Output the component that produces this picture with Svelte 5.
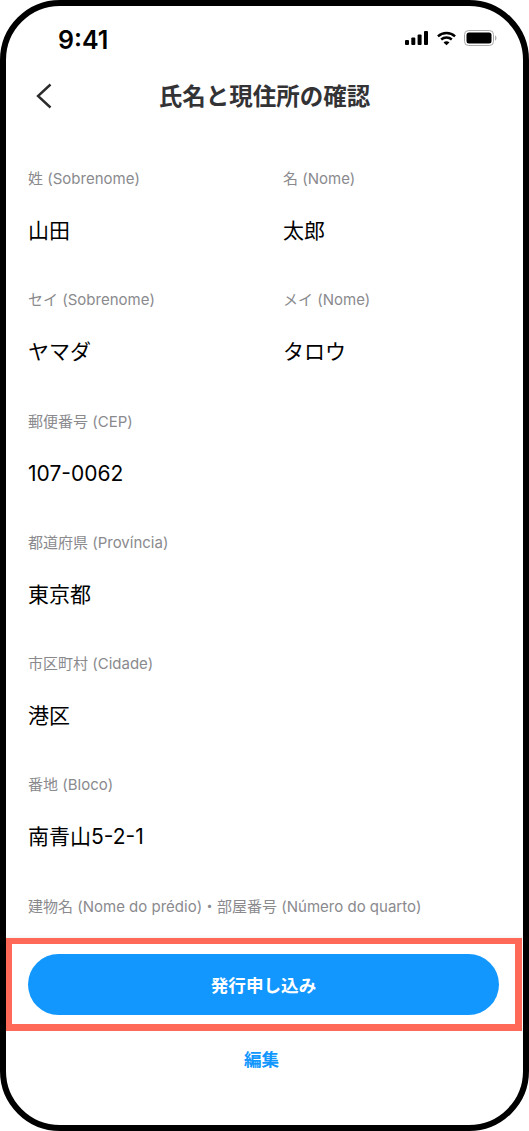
<script>
  const rows = [
    [{ label: '姓 (Sobrenome)', value: '山田' }, { label: '名 (Nome)', value: '太郎' }],
    [{ label: 'セイ (Sobrenome)', value: 'ヤマダ' }, { label: 'メイ (Nome)', value: 'タロウ' }],
    [{ label: '郵便番号 (CEP)', value: '107-0062' }],
    [{ label: '都道府県 (Província)', value: '東京都' }],
    [{ label: '市区町村 (Cidade)', value: '港区' }],
    [{ label: '番地 (Bloco)', value: '南青山5-2-1' }],
    [{ label: '建物名 (Nome do prédio)・部屋番号 (Número do quarto)', value: '' }]
  ];
</script>

<div class="phone">
  <div class="status">
    <span class="time">9:41</span>
    <div class="status-icons">
      <svg width="23" height="14" viewBox="0 0 23 14" fill="#000">
        <rect x="0" y="9" width="4" height="5" rx="1" />
        <rect x="6.3" y="6.5" width="4" height="7.5" rx="1" />
        <rect x="12.6" y="3.5" width="4" height="10.5" rx="1" />
        <rect x="19" y="0" width="4" height="14" rx="1" />
      </svg>
      <svg class="wifi" width="19" height="15" viewBox="0 0 20 15" fill="none" stroke="#000" stroke-width="2.6">
        <path d="M1 5.2C6 .7 14 .7 19 5.2" />
        <path d="M4.4 8.6c3.2-2.8 8-2.8 11.2 0" />
        <path d="M10 14.6 6.9 11.6c1.8-1.5 4.4-1.5 6.2 0Z" fill="#000" stroke="none" />
      </svg>
      <svg width="33" height="16" viewBox="0 0 33 16">
        <rect x="0.5" y="0.5" width="29" height="15" rx="4" fill="none" stroke="#a8a8a8" />
        <rect x="2.5" y="2.5" width="25" height="11" rx="2.5" fill="#000" />
        <path d="M31 5.5c1 .3 1.5 1.3 1.5 2.5s-.5 2.2-1.5 2.5Z" fill="#b0b0b0" />
      </svg>
    </div>
  </div>

  <header class="nav">
    <button class="back" aria-label="戻る">
      <svg width="16" height="26" viewBox="0 0 16 26" fill="none" stroke="#2c2c2e" stroke-width="2.4">
        <path d="M14.5 1.5 2 13l12.5 11.5" />
      </svg>
    </button>
    <h1>氏名と現住所の確認</h1>
  </header>

  <main class="form">
    {#each rows as row}
      <div class="row">
        {#each row as field}
          <div class="field">
            <div class="label">{field.label}</div>
            <div class="value">{field.value}</div>
          </div>
        {/each}
      </div>
    {/each}
  </main>

  <div class="action">
    <button class="primary">発行申し込み</button>
  </div>
  <button class="edit">編集</button>
</div>

<style>
  :global(body) {
    margin: 0;
    background: #fff;
  }

  .phone {
    box-sizing: border-box;
    width: 529px;
    height: 1131px;
    border: 6px solid #000;
    border-radius: 60px;
    background: #fff;
    overflow: hidden;
    display: flex;
    flex-direction: column;
    font-family: Inter, "Noto Sans CJK JP", sans-serif;
  }

  .status {
    height: 57px;
    box-sizing: border-box;
    flex: none;
    display: flex;
    align-items: flex-start;
    justify-content: space-between;
    padding: 19px 26px 0 52px;
  }

  .time {
    font-size: 25px;
    font-weight: 600;
    line-height: 30px;
    color: #000;
  }

  .status-icons {
    display: flex;
    align-items: center;
    gap: 9px;
    margin-top: 5px;
  }

  .wifi {
    margin-right: -1px;
  }

  .nav {
    position: relative;
    height: 64px;
    flex: none;
    display: flex;
    align-items: center;
    justify-content: center;
  }

  .nav h1 {
    margin: 0;
    font-size: 23.5px;
    font-weight: 700;
    color: #333336;
  }

  .back {
    position: absolute;
    left: 30px;
    top: 20px;
    padding: 0;
    border: 0;
    background: none;
    line-height: 0;
  }

  .form {
    flex: 1;
    min-height: 0;
    overflow: hidden;
    padding: 42px 22px 0;
  }

  .row {
    display: flex;
    height: 121.3px;
  }

  .field {
    width: 255px;
    flex: none;
  }

  .row:last-child .field {
    width: auto;
  }

  .label {
    font-size: 15px;
    line-height: 20px;
    color: #8a8a8e;
    white-space: nowrap;
  }

  .value {
    margin-top: 27px;
    font-size: 21px;
    line-height: 30px;
    color: #000;
  }

  .action {
    flex: none;
    box-sizing: border-box;
    height: 93px;
    margin-right: 1px;
    border: solid #ff6a58;
    border-width: 6px 7px 7px 6px;
    padding: 10px 16px 0;
    box-shadow: 0 -2px 2px rgba(0, 0, 0, 0.04);
  }

  .primary {
    display: block;
    width: 100%;
    height: 60.5px;
    border: 0;
    border-radius: 31px;
    background: #1297ff;
    color: #fff;
    font: 700 17.6px Inter, "Noto Sans CJK JP", sans-serif;
  }

  .edit {
    flex: none;
    align-self: center;
    margin: 13px 0 53px -6px;
    padding: 0;
    height: 28px;
    border: 0;
    background: none;
    color: #1297ff;
    font: 700 17.6px Inter, "Noto Sans CJK JP", sans-serif;
  }
</style>
